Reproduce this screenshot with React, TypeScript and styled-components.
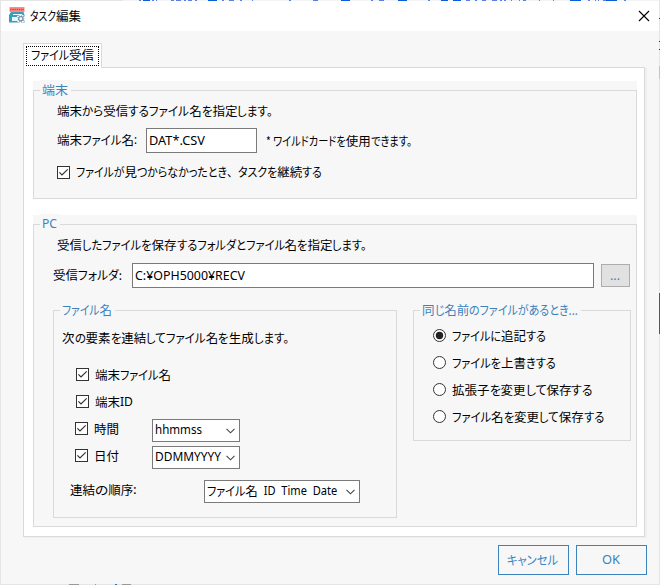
import React, { useLayoutEffect, useRef } from "react";
import styled, { createGlobalStyle } from "styled-components";

const BLUE = "#3c82bd";
const SURFACE = "#f7f7f7";
const LINE = "#dadada";

const GlobalStyle = createGlobalStyle`
  * { box-sizing: border-box; }
  body {
    margin: 0;
    overflow: hidden;
    background: #f0f0f0;
    color: #000;
    font-family: "Noto Sans", "Noto Sans CJK JP", sans-serif;
    font-size: 12.5px;
    line-height: 20px;
  }
`;

/* ---------- text with condensed kana ---------- */

const TextLine = styled.span<{ $w: number; $nudge?: number }>`
  display: inline-flex;
  flex: none;
  width: ${(p) => p.$w}px;
  height: 20px;
  white-space: pre;
  margin-top: ${(p) => p.$nudge ?? 0}px;
`;

type RunKind = "kanji" | "kana" | "comma" | "latin";

const Run = styled.span<{ $kind: RunKind }>`
  display: block;
  flex: none;
  font-family: ${(p) =>
    p.$kind === "latin" ? `"Noto Sans", "Noto Sans CJK JP", sans-serif` : `"Noto Sans CJK JP", sans-serif`};
  font-feature-settings: ${(p) => (p.$kind === "kana" ? `"palt"` : "normal")};
`;

const RunGlyphs = styled.span`
  display: inline-block;
  transform-origin: 0 50%;
`;

const KANJI = /[\u4e00-\u9fff]/;

const kindOf = (run: string): RunKind =>
  KANJI.test(run) ? "kanji" : run === "、" ? "comma" : /[\u3000-\u30ff]/.test(run) ? "kana" : "latin";

interface TextProps {
  children: string;
  w: number;
  nudge?: number;
}

/** Keeps kanji at full width and condenses kana and latin runs into the given width. */
function Text({ children, w, nudge }: TextProps) {
  const ref = useRef<HTMLSpanElement>(null);
  const runs = children.split(/([\u4e00-\u9fff]+|、)/).filter(Boolean);

  useLayoutEffect(() => {
    const spans = Array.from(ref.current!.children) as HTMLElement[];
    const glyphs = spans.map((s) => s.firstElementChild as HTMLElement);
    glyphs.forEach((g) => (g.style.transform = ""));
    spans.forEach((s) => (s.style.width = ""));
    const widths = glyphs.map((g) => g.getBoundingClientRect().width);
    const fixed = widths.filter((_, i) => KANJI.test(runs[i])).reduce((a, b) => a + b, 0);
    const flexible = widths.reduce((a, b) => a + b, 0) - fixed;
    const allKanji = flexible === 0;
    const k = allKanji ? w / fixed : (w - fixed) / flexible;
    spans.forEach((s, i) => {
      if (!allKanji && KANJI.test(runs[i])) return;
      s.style.width = `${widths[i] * k}px`;
      glyphs[i].style.transform = `scaleX(${k})`;
    });
  }, [children, w]);

  return (
    <TextLine ref={ref} $w={w} $nudge={nudge}>
      {runs.map((r, i) => (
        <Run key={i} $kind={kindOf(r)}>
          <RunGlyphs>{r}</RunGlyphs>
        </Run>
      ))}
    </TextLine>
  );
}

/* ---------- window ---------- */

const Window = styled.div`
  position: relative;
  width: 660px;
  height: 585px;
  display: flex;
  flex-direction: column;
  background: ${SURFACE};
  border: 1px solid #e5e5e5;
`;

const TitleBar = styled.header`
  height: 30px;
  flex: none;
  display: flex;
  align-items: center;
  background: #fff;
  padding: 0 9px 0 8px;
`;

const AppIcon = styled.svg`
  width: 17px;
  height: 17px;
  margin: -1px 4px 0 0;
`;

const CloseIcon = styled.svg`
  width: 12px;
  height: 12px;
  margin: -1px 0 0 auto;
`;

const Desktop = styled.svg`
  position: absolute;
  left: -1px;
  top: -1px;
  pointer-events: none;
`;

const Tabs = styled.div`
  padding: 12px 0 0 22px;
  height: 37px;
  flex: none;
`;

const Tab = styled.div`
  position: relative;
  width: 79px;
  height: 25px;
  padding: 2px;
  background: #fff;
  border: 1px solid ${LINE};
  border-bottom: 0;
`;

const TabFocus = styled.div`
  width: 73px;
  height: 20px;
  border: 1px dotted #000;
  display: flex;
  align-items: center;
  padding-left: 4px;
`;

const Panel = styled.main`
  width: 622px;
  height: 470px;
  flex: none;
  margin: -1px 0 0 22px;
  padding: 13px 7px 0 9px;
  background: #fff;
  border: 1px solid ${LINE};
  box-shadow: 2px 1px 0 #efefef;
`;

const Section = styled.section<{ $h: number }>`
  width: 604px;
  height: ${(p) => p.$h}px;
  padding-top: 9px;
  background: ${SURFACE};
  margin-bottom: 16px;
`;

const Frame = styled.div<{ $w: number; $h: number }>`
  width: ${(p) => p.$w}px;
  height: ${(p) => p.$h}px;
  flex: none;
  display: flex;
  flex-direction: column;
  border: 1px solid ${LINE};
`;

const Legend = styled.div`
  align-self: flex-start;
  display: flex;
  height: 20px;
  flex: none;
  margin: -11px 0 0 6px;
  padding: 0 3px 0 2px;
  background: ${SURFACE};
  color: ${BLUE};
`;

const Row = styled.div<{ $h: number; $x: number; $top?: number }>`
  display: flex;
  align-items: center;
  flex: none;
  height: ${(p) => p.$h}px;
  margin-top: ${(p) => p.$top ?? 0}px;
  padding-left: ${(p) => p.$x}px;
`;

const RadioList = styled.div`
  display: flex;
  flex-direction: column;
  padding-top: 2px;
`;

const Field = styled.div<{ $w: number; $gap: number }>`
  width: ${(p) => p.$w}px;
  height: 25px;
  margin-left: ${(p) => p.$gap}px;
  padding-left: 2px;
  display: flex;
  align-items: center;
  background: #fff;
  border: 1px solid #7a7a7a;
`;

const Note = styled.div`
  display: flex;
  margin-left: 9px;
`;

const Browse = styled.button`
  width: 29px;
  height: 23px;
  margin: 0 0 0 7px;
  padding: 0 0 0 8px;
  display: flex;
  align-items: center;
  font: inherit;
  color: ${BLUE};
  background: #e1e1e1;
  border: 1px solid #adadad;
`;

const Columns = styled.div`
  display: flex;
  align-items: flex-start;
  gap: 16px;
  padding: 22px 0 0 19px;
`;

const Box = styled.svg`
  width: 13px;
  height: 13px;
  flex: none;
  margin-right: 6px;
`;

const Combo = styled.div<{ $w: number; $gap: number }>`
  width: ${(p) => p.$w}px;
  height: 23px;
  margin: 4px 0 0 ${(p) => p.$gap}px;
  padding: 0 4px 0 2px;
  flex: none;
  display: flex;
  align-items: center;
  justify-content: space-between;
  background: #fff;
  border: 1px solid #7a7a7a;
`;

const Chevron = styled.svg`
  width: 9px;
  height: 6px;
  flex: none;
`;

const Footer = styled.footer`
  display: flex;
  justify-content: flex-end;
  gap: 7px;
  padding: 8px 12px 0 0;
`;

const Action = styled.button`
  width: 71px;
  height: 30px;
  padding: 0 2px 0 0;
  display: flex;
  align-items: center;
  justify-content: center;
  font: inherit;
  color: ${BLUE};
  background: ${SURFACE};
  border: 1px solid ${BLUE};
`;

const Check = () => (
  <Box viewBox="0 0 13 13">
    <rect x=".5" y=".5" width="12" height="12" fill="#fff" stroke="#333" />
    <path d="M2.4 6.4 5 9 10.7 3.4" fill="none" stroke="#333" strokeWidth="1.2" />
  </Box>
);

const Radio = ({ on }: { on?: boolean }) => (
  <Box viewBox="0 0 13 13">
    <circle cx="6.5" cy="6.5" r="6" fill="#fff" stroke="#333" />
    {on && <circle cx="6.5" cy="6.5" r="3.7" fill="#222" />}
  </Box>
);

const Arrow = () => (
  <Chevron viewBox="0 0 9 6">
    <path d="M.5 .8 4.5 4.8 8.5 .8" fill="none" stroke="#444" strokeWidth="1.1" />
  </Chevron>
);

const TOP_BITS: [number, number][] = [
  [139, 2], [143, 7], [152, 2], [156, 1], [171, 3], [176, 5], [184, 2], [188, 4], [195, 2], [208, 9], [222, 2],
  [229, 5], [240, 2], [252, 1], [289, 2], [313, 5], [341, 9], [371, 2], [379, 5], [398, 9], [428, 2], [441, 7],
  [453, 8], [466, 4], [475, 2], [482, 4], [492, 5], [500, 2], [504, 2], [511, 1], [519, 1], [523, 3], [539, 1],
  [553, 1], [570, 11], [588, 2], [595, 1], [598, 1], [603, 3], [606, 11], [624, 2],
];

const CHOICES: [string, number][] = [
  ["ファイルに追記する", 94],
  ["ファイルを上書きする", 104],
  ["拡張子を変更して保存する", 141],
  ["ファイル名を変更して保存する", 152],
];

export default function App() {
  return (
    <>
      <GlobalStyle />
      <Window>
        <TitleBar>
          <AppIcon viewBox="0 0 17 17">
            <path d="M.5 0h15v5H.5z" fill="#ff8a86" />
            <path d="M1 2.5h14" stroke="#d0434c" strokeWidth="1.5" strokeDasharray="1.5 .7" />
            <path d="M2 5h12.5l1 3v7.5H0V8z" fill="#3b9dbb" />
            <path d="M4 7h9v1H4zM3 10h6v4H3z" fill="#e9f6f9" />
            <circle cx="11.8" cy="11.7" r="3.6" fill="#8394a2" stroke="#fff" strokeWidth="1.7" strokeDasharray="1.7 .8" />
            <circle cx="11.8" cy="11.7" r="2.6" fill="#7f98a8" />
            <circle cx="11.8" cy="11.7" r="1.4" fill="#fff" />
          </AppIcon>
          <Text w={51} nudge={-1}>タスク編集</Text>
          <CloseIcon viewBox="0 0 12 12">
            <path d="M1 1 11 11M11 1 1 11" stroke="#000" strokeWidth="1.1" />
          </CloseIcon>
        </TitleBar>

        <Tabs>
          <Tab>
            <TabFocus>
              <Text w={63} nudge={-2}>ファイル受信</Text>
            </TabFocus>
          </Tab>
        </Tabs>

        <Panel>
          <Section $h={118}>
            <Frame $w={604} $h={109}>
              <Legend><Text w={26}>端末</Text></Legend>
              <Row $h={20} $x={23} $top={1}><Text w={216}>端末から受信するファイル名を指定します。</Text></Row>
              <Row $h={25} $x={23} $top={7}>
                <Text w={80} nudge={-1}>端末ファイル名:</Text>
                <Field $w={111} $gap={9}><Text w={56}>DAT*.CSV</Text></Field>
                <Note><Text w={146}>* ワイルドカードを使用できます。</Text></Note>
              </Row>
              <Row $h={20} $x={23} $top={9}>
                <Check />
                <Text w={246}>ファイルが見つからなかったとき、タスクを継続する</Text>
              </Row>
            </Frame>
          </Section>

          <Section $h={312}>
            <Frame $w={604} $h={303}>
              <Legend><Text w={15}>PC</Text></Legend>
              <Row $h={20} $x={23} $top={1}><Text w={310}>受信したファイルを保存するフォルダとファイル名を指定します。</Text></Row>
              <Row $h={25} $x={19} $top={8}>
                <Text w={69} nudge={-1}>受信フォルダ:</Text>
                <Field $w={462} $gap={10}><Text w={110}>C:¥OPH5000¥RECV</Text></Field>
                <Browse><Text w={10}>...</Text></Browse>
              </Row>
              <Columns>
                <Frame $w={344} $h={208}>
                  <Legend><Text w={50}>ファイル名</Text></Legend>
                  <Row $h={20} $x={8} $top={8}><Text w={227}>次の要素を連結してファイル名を生成します。</Text></Row>
                  <Row $h={27} $x={22} $top={13}><Check /><Text w={76}>端末ファイル名</Text></Row>
                  <Row $h={27} $x={22}><Check /><Text w={38}>端末ID</Text></Row>
                  <Row $h={27} $x={21}>
                    <Check /><Text w={25}>時間</Text>
                    <Combo $w={88} $gap={33}><Text w={47} nudge={-1}>hhmmss</Text><Arrow /></Combo>
                  </Row>
                  <Row $h={27} $x={21}>
                    <Check /><Text w={25}>日付</Text>
                    <Combo $w={88} $gap={33}><Text w={66} nudge={-1}>DDMMYYYY</Text><Arrow /></Combo>
                  </Row>
                  <Row $h={23} $x={16} $top={9}>
                    <Text w={67}>連結の順序:</Text>
                    <Combo $w={156} $gap={67}><Text w={130} nudge={-1}>ファイル名  ID  Time  Date</Text><Arrow /></Combo>
                  </Row>
                </Frame>
                <Frame $w={218} $h={131}>
                  <Legend><Text w={156}>同じ名前のファイルがあるとき...</Text></Legend>
                  <RadioList>
                    {CHOICES.map(([label, w], i) => (
                      <Row key={label} $h={27} $x={19}>
                        <Radio on={i === 0} />
                        <Text w={w}>{label}</Text>
                      </Row>
                    ))}
                  </RadioList>
                </Frame>
              </Columns>
            </Frame>
          </Section>
        </Panel>

        <Footer>
          <Action><Text w={51}>キャンセル</Text></Action>
          <Action><Text w={18}>OK</Text></Action>
        </Footer>

        <Desktop width="660" height="585" shapeRendering="crispEdges">
          <path d="M123 0h536v1H123z" fill="#f3f4f8" />
          {TOP_BITS.map(([x, w]) => (
            <rect key={x} x={x} y="0" width={w} height="1" fill={w > 6 ? "#0b5fd6" : "#5d7fe0"} />
          ))}
          <path d="M659 18h1v1h-1zM659 41h1v1h-1zM659 49h1v1h-1z" fill="#333" />
          <path d="M659 66h1v13h-1z" fill="#c4c4c4" />
          <path d="M659 293h1v41h-1z" fill="#1268b8" />
          <path d="M69 584h10v1H69zM95 584h1v1h-1zM122 584h9v1h-9z" fill="#999" />
          <path d="M115 584h2v1h-2z" fill="#2f75b5" />
        </Desktop>
      </Window>
    </>
  );
}
